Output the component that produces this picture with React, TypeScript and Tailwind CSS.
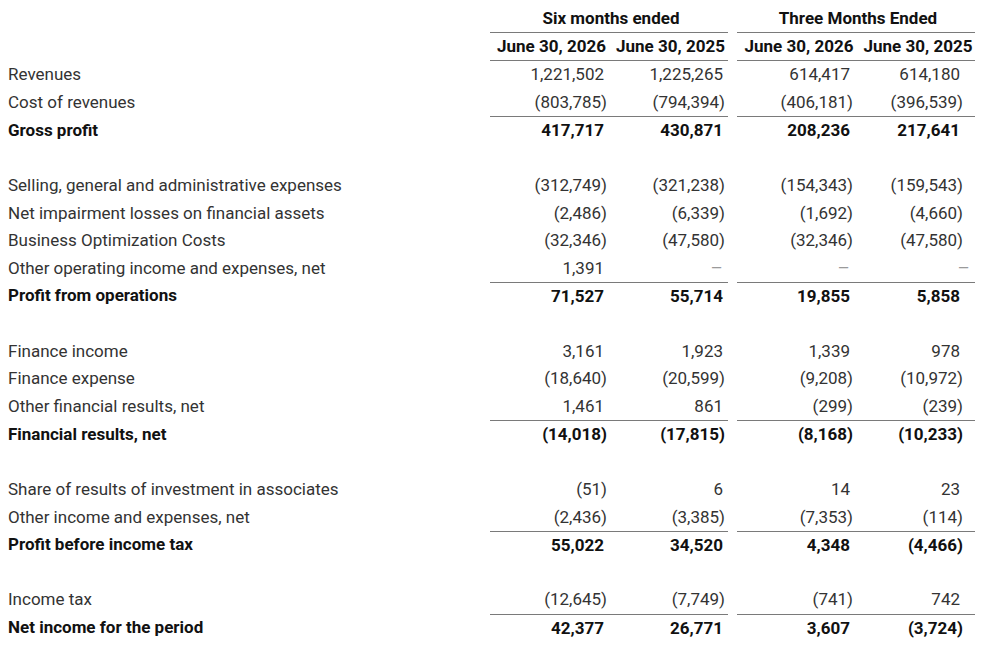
import React from "react";

type Cell = string;
type Row = { label?: string; vals?: Cell[]; total?: boolean; blank?: boolean };

const rows: Row[] = [
  { label: "Revenues", vals: ["1,221,502", "1,225,265", "614,417", "614,180"] },
  { label: "Cost of revenues", vals: ["(803,785)", "(794,394)", "(406,181)", "(396,539)"] },
  { label: "Gross profit", vals: ["417,717", "430,871", "208,236", "217,641"], total: true },
  { blank: true },
  { label: "Selling, general and administrative expenses", vals: ["(312,749)", "(321,238)", "(154,343)", "(159,543)"] },
  { label: "Net impairment losses on financial assets", vals: ["(2,486)", "(6,339)", "(1,692)", "(4,660)"] },
  { label: "Business Optimization Costs", vals: ["(32,346)", "(47,580)", "(32,346)", "(47,580)"] },
  { label: "Other operating income and expenses, net", vals: ["1,391", "—", "—", "—"] },
  { label: "Profit from operations", vals: ["71,527", "55,714", "19,855", "5,858"], total: true },
  { blank: true },
  { label: "Finance income", vals: ["3,161", "1,923", "1,339", "978"] },
  { label: "Finance expense", vals: ["(18,640)", "(20,599)", "(9,208)", "(10,972)"] },
  { label: "Other financial results, net", vals: ["1,461", "861", "(299)", "(239)"] },
  { label: "Financial results, net", vals: ["(14,018)", "(17,815)", "(8,168)", "(10,233)"], total: true },
  { blank: true },
  { label: "Share of results of investment in associates", vals: ["(51)", "6", "14", "23"] },
  { label: "Other income and expenses, net", vals: ["(2,436)", "(3,385)", "(7,353)", "(114)"] },
  { label: "Profit before income tax", vals: ["55,022", "34,520", "4,348", "(4,466)"], total: true },
  { blank: true },
  { label: "Income tax", vals: ["(12,645)", "(7,749)", "(741)", "742"] },
  { label: "Net income for the period", vals: ["42,377", "26,771", "3,607", "(3,724)"], total: true },
];

const colW = ["w-[118px]", "w-[120px]", "w-[119px]", "w-[119px]"];
const parenPr = ["pr-[1px]", "pr-[3px]", "pr-[3px]", "pr-[12px]"];
const posPr = ["pr-[4px]", "pr-[5px]", "pr-[6px]", "pr-[15px]"];
const dashPr = ["pr-[4px]", "pr-[6px]", "pr-[7px]", "pr-[6px]"];

function ValCell({ v, i, bold }: { v: string; i: number; bold?: boolean }) {
  const isParen = v.startsWith("(");
  const isDash = v === "—";
  const pr = isDash ? dashPr[i] : isParen ? parenPr[i] : posPr[i];
  return (
    <div
      className={`${colW[i]} ${pr} h-full flex items-center justify-end ${
        isDash ? "text-[#9a9a9a] text-[14px]" : bold ? "font-bold text-[#111]" : "text-[#333]"
      }`}
    >
      {v}
    </div>
  );
}

export default function App() {
  return (
    <div
      className="w-[1000px] h-[653px] bg-white pt-[4px] text-[17px] leading-none"
      style={{ fontFamily: "Roboto, 'Liberation Sans', sans-serif" }}
    >
      {/* header row 1 */}
      <div className="flex h-[29px]">
        <div className="w-[490px]" />
        <div className="w-[238px] border-b border-[#7a7a7a] flex items-center justify-center font-bold text-[#111] pl-[4px]">
          Six months ended
        </div>
        <div className="w-[9px]" />
        <div className="w-[238px] border-b border-[#7a7a7a] flex items-center justify-center font-bold text-[#111] pl-[4px]">
          Three Months Ended
        </div>
      </div>
      {/* header row 2 */}
      <div className="flex h-[28px]">
        <div className="w-[490px]" />
        <div className="w-[238px] border-b border-[#7a7a7a] flex">
          <div className="w-[118px] flex items-center justify-center font-bold text-[#111] pl-[5px] whitespace-nowrap">June 30, 2026</div>
          <div className="w-[120px] flex items-center justify-center font-bold text-[#111] pl-[5px] whitespace-nowrap">June 30, 2025</div>
        </div>
        <div className="w-[9px]" />
        <div className="w-[238px] border-b border-[#7a7a7a] flex">
          <div className="w-[119px] flex items-center justify-center font-bold text-[#111] pl-[5px] whitespace-nowrap">June 30, 2026</div>
          <div className="w-[119px] flex items-center justify-center font-bold text-[#111] pl-[5px] whitespace-nowrap">June 30, 2025</div>
        </div>
      </div>
      {rows.map((r, idx) =>
        r.blank ? (
          <div key={idx} className="h-[27.65px]" />
        ) : (
          <div key={idx} className="flex h-[27.65px]">
            <div
              className={`w-[490px] pl-[8px] flex items-center ${
                r.total ? "font-bold text-[#111]" : "text-[#333]"
              }`}
            >
              {r.label}
            </div>
            <div className={`w-[238px] flex ${r.total ? "border-t border-[#7a7a7a]" : ""}`}>
              <ValCell v={r.vals![0]} i={0} bold={r.total} />
              <ValCell v={r.vals![1]} i={1} bold={r.total} />
            </div>
            <div className="w-[9px]" />
            <div className={`w-[238px] flex ${r.total ? "border-t border-[#7a7a7a]" : ""}`}>
              <ValCell v={r.vals![2]} i={2} bold={r.total} />
              <ValCell v={r.vals![3]} i={3} bold={r.total} />
            </div>
          </div>
        )
      )}
    </div>
  );
}
